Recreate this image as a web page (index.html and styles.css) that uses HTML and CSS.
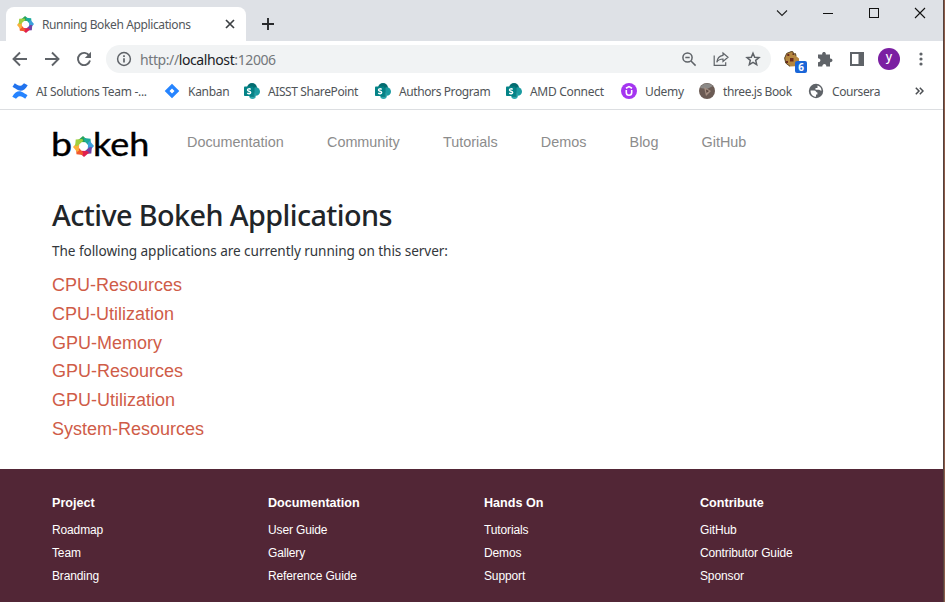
FILE: index.html
```html
<!DOCTYPE html>
<html lang="en">
<head>
<meta charset="utf-8">
<title>Running Bokeh Applications</title>
<link rel="stylesheet" href="styles.css">
</head>
<body>
<svg width="0" height="0" class="defs">
  <defs>
    <symbol id="ring" viewBox="0 0 20 20">
      <g>
        <path d="M9.500 0l4.800 4.200-.8 1.800-7-.4-1.800-1.600z" fill="#27a35a"/>
        <path d="M9.500 0l4.800 4.200-.8 1.800-7-.4-1.800-1.600z" fill="#1bab9c" transform="rotate(45 10 10)"/>
        <path d="M9.500 0l4.800 4.200-.8 1.800-7-.4-1.800-1.600z" fill="#3c9fdc" transform="rotate(90 10 10)"/>
        <path d="M9.500 0l4.800 4.200-.8 1.800-7-.4-1.800-1.600z" fill="#7443a5" transform="rotate(135 10 10)"/>
        <path d="M9.500 0l4.800 4.200-.8 1.800-7-.4-1.800-1.600z" fill="#e0204f" transform="rotate(180 10 10)"/>
        <path d="M9.500 0l4.800 4.200-.8 1.800-7-.4-1.800-1.600z" fill="#f25a2c" transform="rotate(225 10 10)"/>
        <path d="M9.500 0l4.800 4.200-.8 1.800-7-.4-1.800-1.600z" fill="#fbb03b" transform="rotate(270 10 10)"/>
        <path d="M9.500 0l4.800 4.200-.8 1.800-7-.4-1.800-1.600z" fill="#9fd03f" transform="rotate(315 10 10)"/>
      </g>
    </symbol>
    <symbol id="sharepoint" viewBox="0 0 16 16">
      <circle cx="8" cy="5" r="5" fill="#036c70"/>
      <circle cx="11.700" cy="8.500" r="4.300" fill="#1a9ba1"/>
      <circle cx="8.500" cy="12.500" r="3.400" fill="#2ba9ae"/>
      <path d="M6 4h4.500v10H6z" fill="#025a5d" opacity=".5"/>
      <rect x="0" y="3.500" width="9.500" height="9.500" rx=".8" fill="#038387"/>
      <path d="M6.700 6.300C5.500 5.500 3.500 5.600 3.500 7c0 1.500 3.200 1 3.200 2.600 0 1.400-2.200 1.500-3.500.6" fill="none" stroke="#fff" stroke-width="1.400"/>
    </symbol>
  </defs>
</svg>
<div class="window">
  <header class="tabstrip">
    <div class="tab">
      <svg class="favicon" width="17" height="17"><use href="#ring"/></svg>
      <span class="tab-title">Running Bokeh Applications</span>
      <svg class="tab-close" width="10" height="10" viewBox="0 0 10 10"><path d="M1 1l8 8M9 1l-8 8" stroke="#3c4043" stroke-width="1.700"/></svg>
    </div>
    <svg class="new-tab" width="12" height="12" viewBox="0 0 12 12"><path d="M6 0v12M0 6h12" stroke="#27292c" stroke-width="1.900"/></svg>
    <div class="controls">
      <svg width="12" height="12" viewBox="0 0 12 12"><path d="M1 3.500l5 5 5-5" fill="none" stroke="#222" stroke-width="1.100"/></svg>
      <svg width="12" height="12" viewBox="0 0 12 12"><path d="M1 6.500h10" stroke="#111"/></svg>
      <svg width="12" height="12" viewBox="0 0 12 12"><rect x="1.500" y="1.500" width="9" height="9" fill="none" stroke="#111"/></svg>
      <svg width="12" height="12" viewBox="0 0 12 12"><path d="M1 1l10 10M11 1L1 11" stroke="#111" stroke-width="1.100"/></svg>
    </div>
  </header>

  <div class="toolbar">
    <svg width="16" height="16" viewBox="0 0 16 16"><path d="M15 8H2M8 1.500L1.500 8 8 14.500" fill="none" stroke="#5f6368" stroke-width="1.900"/></svg>
    <svg width="16" height="16" viewBox="0 0 16 16"><path d="M1 8h13M8 1.500L14.500 8 8 14.500" fill="none" stroke="#5f6368" stroke-width="1.900"/></svg>
    <svg width="16" height="16" viewBox="0 0 16 16"><path d="M13.300 4.800A6.100 6.100 0 1 0 14 9.500" fill="none" stroke="#5f6368" stroke-width="1.900"/><path d="M15 .8v6.200H8.800z" fill="#5f6368"/></svg>
    <div class="omnibox">
      <svg width="16" height="16" viewBox="0 0 16 16"><circle cx="8" cy="8" r="6.400" fill="none" stroke="#5f6368" stroke-width="1.500"/><path d="M8 7.200v4.200M8 4.300v1.700" stroke="#5f6368" stroke-width="1.700"/></svg>
      <span class="url">http://<b>localhost</b>:12006</span>
      <div class="omni-actions">
        <svg width="16" height="16" viewBox="0 0 16 16"><circle cx="6.500" cy="6.500" r="4.600" fill="none" stroke="#5f6368" stroke-width="1.500"/><path d="M10 10l4.600 4.600M4.300 6.500h4.400" stroke="#5f6368" stroke-width="1.500"/></svg>
        <svg width="16" height="16" viewBox="0 0 16 16"><path d="M1.200 4.500v9.800h11.500v-3M10 2l5 4.200-5 4.200V8C7 8 5 9 3.800 11.200 4.200 7.500 6.300 4.900 10 4.300z" fill="none" stroke="#5f6368" stroke-width="1.200"/></svg>
        <svg width="16" height="16" viewBox="0 0 16 16"><path d="M8 2.200l1.700 4 4.300.4-3.300 2.800 1 4.300L8 11.400l-3.700 2.300 1-4.300L2 6.600l4.300-.4z" fill="none" stroke="#5f6368" stroke-width="1.500"/></svg>
      </div>
    </div>
    <div class="extensions">
      <div class="cookie">
        <svg width="16" height="16" viewBox="0 0 16 16"><path d="M7 .5l2 .2.500 2.300 2-.5.500 2.500 3 2.500V12l-4 3.300-5 .2L1.500 12 .5 7 2.500 2.500z" fill="#b5873f"/><path d="M3.300 3h2v2h-2zM6 7h3.500v3.500H6zM2 10h2v2H2zM8.500 2.500H10V4H8.500z" fill="#6b2a1c"/><path d="M7 .7L2.700 2.400.7 7l1 5L6 15.300M7 .6l2 .2.500 2.300 2-.5.500 2.500" fill="none" stroke="#5c4527"/></svg>
        <span class="badge">6</span>
      </div>
      <svg width="16" height="16" viewBox="0 0 16 16"><path d="M1 3.500h4.200C4.700.2 9.300.2 8.800 3.500H13v4c3.300-.3 3.300 4 0 3.700V15.500H9.300c.2-3.500-4.100-3.500-4 0H1v-4.200c3.200 0 3.200-4 0-4z" fill="#5f6368"/></svg>
      <svg width="16" height="16" viewBox="0 0 16 16"><path fill-rule="evenodd" d="M1 1h14v14H1zM3 3v10h6.500V3z" fill="#5f6368"/></svg>
      <span class="avatar">y</span>
      <svg class="kebab" width="4" height="16" viewBox="0 0 4 16"><g fill="#5f6368"><circle cx="2" cy="3" r="1.600"/><circle cx="2" cy="8" r="1.600"/><circle cx="2" cy="13" r="1.600"/></g></svg>
    </div>
  </div>

  <nav class="bookmarks">
    <a class="bm w1"><svg width="16" height="16" viewBox="0 0 16 16"><path d="M.5 3.800L2.800.3C5 1.600 6.500 3 8.500 2.700 10 2.500 11 1 12 .2l3.700 2C13 7.300 9.500 8.500 6.500 7.300 4.200 6.400 2.500 5 .5 3.800z" fill="#2173ee"/><path d="M15.500 12.200l-2.300 3.500C11 14.400 9.500 13 7.500 13.300 6 13.500 5 15 4 15.800l-3.700-2C3 8.700 6.500 7.500 9.500 8.700c2.300.9 4 2.300 6 3.500z" fill="#2684ff"/></svg><span>AI Solutions Team -...</span></a>
    <a class="bm w2"><svg width="16" height="16" viewBox="0 0 16 16"><path fill-rule="evenodd" d="M8 .7L15.300 8 8 15.300.7 8zM8 5.500L5.500 8 8 10.500 10.500 8z" fill="#2684ff"/></svg><span>Kanban</span></a>
    <a class="bm w3"><svg width="16" height="16"><use href="#sharepoint"/></svg><span>AISST SharePoint</span></a>
    <a class="bm w4"><svg width="16" height="16"><use href="#sharepoint"/></svg><span>Authors Program</span></a>
    <a class="bm w5"><svg width="16" height="16"><use href="#sharepoint"/></svg><span>AMD Connect</span></a>
    <a class="bm w6"><svg width="16" height="16" viewBox="0 0 16 16"><circle cx="8" cy="8" r="8" fill="#a435f0"/><path d="M5.300 7v2.500c0 3.700 5.400 3.700 5.400 0V7M5 5.300L8 3.600l3 1.700" fill="none" stroke="#fff" stroke-width="1.600"/></svg><span>Udemy</span></a>
    <a class="bm w7"><svg width="16" height="16" viewBox="0 0 16 16"><circle cx="8" cy="8" r="8" fill="#6b5b54"/><path d="M1 5a8 8 0 0 1 13-2L8 6z" fill="#8b8987"/><path d="M5 4l7 4-5 5z" fill="#a48e81"/><path d="M7 6.500L10 8l-2.500 2z" fill="#57453e"/></svg><span>three.js Book</span></a>
    <a class="bm w8"><svg width="16" height="16" viewBox="0 0 16 16"><circle cx="8" cy="8" r="7.200" fill="#5f6368"/><path d="M2.600 7.500h3.800c1.600 0 1.600 2 3 2v2H8v2.300C4.800 13.700 2.400 11 2.600 7.500zM9.500 2.600c2.300.5 4 2.600 4 5.200-1.500 0-1.500-1-2.500-1H7.500V5h2z" fill="#fff"/></svg><span>Coursera</span></a>
    <svg class="more" width="9" height="8" viewBox="0 0 9 8"><path d="M.8.800L4 4 .8 7.200M4.800.800L8 4 4.800 7.200" fill="none" stroke="#4a4d51" stroke-width="1.500"/></svg>
  </nav>

  <div class="page">
    <div class="site-nav">
      <div class="logo"><span class="logo-b">b</span><svg width="21" height="21"><use href="#ring"/></svg><span class="logo-keh">keh</span></div>
      <a>Documentation</a><a>Community</a><a>Tutorials</a><a>Demos</a><a>Blog</a><a>GitHub</a>
    </div>
    <main>
      <h1>Active Bokeh Applications</h1>
      <p>The following applications are currently running on this server:</p>
      <ul class="apps">
        <li>CPU-Resources</li>
        <li>CPU-Utilization</li>
        <li>GPU-Memory</li>
        <li>GPU-Resources</li>
        <li>GPU-Utilization</li>
        <li>System-Resources</li>
      </ul>
    </main>
    <footer>
      <section><h2>Project</h2><a>Roadmap</a><a>Team</a><a>Branding</a></section>
      <section><h2>Documentation</h2><a>User Guide</a><a>Gallery</a><a>Reference Guide</a></section>
      <section><h2>Hands On</h2><a>Tutorials</a><a>Demos</a><a>Support</a></section>
      <section><h2>Contribute</h2><a>GitHub</a><a>Contributor Guide</a><a>Sponsor</a></section>
    </footer>
  </div>
</div>
</body>
</html>
```
FILE: styles.css
```css
* { box-sizing: border-box; }
body { margin: 0; background: #8b5a48; overflow: hidden; font-family: "Noto Sans", sans-serif; }
svg { display: block; flex: none; }
.defs { position: absolute; }
.window { width: 944px; height: 602px; background: #fff; border-right: 1px solid #54423e; display: flex; flex-direction: column; }

.tabstrip { height: 41px; background: #dee1e6; display: flex; flex: none; padding-left: 6px; }
.tab { width: 240px; height: 34px; margin-top: 7px; background: #fff; border-radius: 8px 8px 0 0; display: flex; align-items: center; padding-left: 11px; }
.tab-title { width: 182px; margin-left: 8px; font-size: 12px; letter-spacing: -0.38px; color: #53575b; white-space: nowrap; }
.tab-close { margin-left: 1px; }
.new-tab { margin: 18px 0 0 16px; }
.controls { display: flex; gap: 34px; margin: 7px 17px 0 auto; }

.toolbar { height: 36px; flex: none; display: flex; align-items: center; padding-left: 12px; gap: 16px; }
.omnibox { width: 665px; height: 28px; margin-left: -2px; border-radius: 14px; background: #f1f3f4; display: flex; align-items: center; padding: 0 10px; }
.url { margin: 0 0 0 8px; font-size: 14px; letter-spacing: -0.4px; color: #74787c; white-space: nowrap; }
.url b { font-weight: 400; color: #202124; }
.omni-actions { display: flex; gap: 16px; margin-left: auto; }
.extensions { display: flex; align-items: center; }
.extensions > svg { margin-right: 16px; }
.cookie { position: relative; margin: 0 17px 0 -3px; }
.badge { position: absolute; left: 11px; top: 10px; width: 12px; height: 12px; border-radius: 2px; background: #1a66d8; color: #fff; font-size: 10px; font-weight: 700; line-height: 12px; text-align: center; }
.avatar { width: 22px; height: 22px; margin-left: -3px; border-radius: 50%; background: #7b1fa2; color: #fff; font-size: 12px; font-weight: 500; line-height: 18px; text-align: center; }
.extensions > .kebab { margin: 0 0 0 19px; }

.bookmarks { height: 33px; flex: none; border-bottom: 1px solid #dcdee1; display: flex; align-items: center; padding: 0 19px 5px 12px; font-size: 12px; color: #505458; }
.bm { display: flex; gap: 8px; align-items: center; white-space: nowrap; }
.bm span { margin-top: 1px; letter-spacing: -0.4px; }
.bm.w1 span, .bm.w2 span, .bm.w5 span, .bm.w6 span { letter-spacing: -0.3px; }
.w1 { width: 152px; }
.w2 { width: 80px; }
.w3 { width: 131px; }
.w4 { width: 131px; }
.w5 { width: 115px; }
.w6 { width: 78px; }
.w7 { width: 109px; }
.w8 { width: 80px; }
.more { margin-left: auto; }

.page { flex: 1; display: flex; flex-direction: column; }
.site-nav { display: flex; align-items: center; gap: 43.2px; height: 64px; padding-left: 52px; font: 14.4px "Liberation Sans", sans-serif; color: #8c8c8c; }
.logo { display: flex; align-items: center; width: 98px; height: 34px; margin-right: -6.200px; padding-top: 5px; font: 33px/34px Lato, sans-serif; color: #000; -webkit-text-stroke: 0.4px #000; }
.logo svg { margin-top: 4px; }
.logo-b, .logo-keh { margin-top: -4px; transform: scaleX(1.14); transform-origin: left; }
.logo-b { width: 22px; margin-left: -1px; }
.logo-keh { margin-left: -1px; transform: scaleX(1.09); }
main { height: 295px; padding-left: 52px; color: #212529; }
h1 { margin: 20px 0 0; font-size: 28.8px; font-weight: 500; line-height: 42px; letter-spacing: -0.6px; }
p { margin: 4px 0 0; font-size: 13.6px; line-height: 22px; letter-spacing: -0.07px; color: #33373b; }
.apps { list-style: none; margin: 9px 0 0; padding: 0; font: 18px/28.8px "Liberation Sans", sans-serif; color: #cf5c48; }
footer { flex: 1; background: #522636; color: #fff; display: grid; grid-template-columns: repeat(4, 216px); align-content: start; padding: 24px 0 0 52px; font-family: "Liberation Sans", sans-serif; }
h2 { margin: 0 0 6px; font-size: 12.6px; line-height: 20px; }
footer a { display: block; font-size: 12px; line-height: 23px; letter-spacing: -0.13px; }
```
